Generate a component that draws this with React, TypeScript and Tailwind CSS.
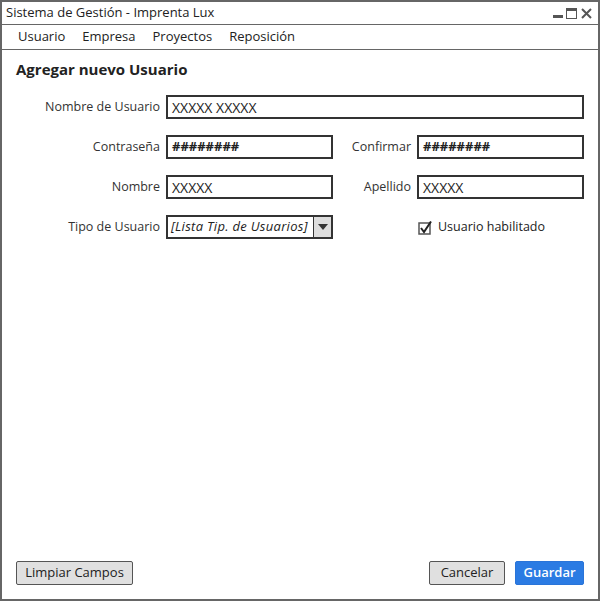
import React from 'react';

const font = { fontFamily: '"Open Sans", "Lato", "Liberation Sans", sans-serif' };

const Field: React.FC<{ value: string; className?: string }> = ({ value, className = '' }) => (
  <div
    className={`flex h-6 items-center border-2 border-[#333] bg-white px-[4px] pt-[1px] text-[#222] ${className}`}
  >
    {value}
  </div>
);

const Label: React.FC<{ text: string }> = ({ text }) => (
  <div className="flex h-6 items-center justify-end pt-[2px] text-[12.5px] text-[#333]">{text}</div>
);

const Button: React.FC<{ text: string; primary?: boolean; className?: string }> = ({
  text,
  primary,
  className = '',
}) => (
  <button
    className={`h-6 rounded-[2px] border text-[13px] ${
      primary
        ? 'border-[#2a74d8] bg-[#2b7be3] font-semibold text-white'
        : 'border-[#555] bg-[#e0e0e0] text-[#222]'
    } ${className}`}
  >
    {text}
  </button>
);

export default function App() {
  return (
    <div style={font} className="flex h-[601px] w-[600px] flex-col border-2 border-[#666] bg-white">
      {/* title bar */}
      <div className="flex h-[23px] items-center justify-between border-b border-[#666] pl-[4px] pr-[6px]">
        <span className="text-[13px] text-[#222]">Sistema de Gestión - Imprenta Lux</span>
        <div className="flex items-end gap-[3px] pt-[1px]">
          <div className="mb-[1px] h-[3px] w-[10px] bg-[#555]" />
          <div className="h-[11px] w-[11px] border border-[#555] border-t-[3px]" />
          <svg width="11" height="11" viewBox="0 0 11 11" className="ml-[1px]">
            <path d="M1 1 L10 10 M10 1 L1 10" stroke="#555" strokeWidth="2" />
          </svg>
        </div>
      </div>

      {/* menu */}
      <div className="flex h-[25px] items-center gap-[17px] border-b border-[#666] pl-[16px] text-[13px] text-[#222]">
        <span>Usuario</span>
        <span>Empresa</span>
        <span>Proyectos</span>
        <span>Reposición</span>
      </div>

      <div className="flex flex-1 flex-col px-[14px] pb-[14px]">
        <h1 className="mt-[8px] text-[15px] font-bold text-[#222]">Agregar nuevo Usuario</h1>

        <div className="mt-[14px] grid grid-cols-[144px_167px_1fr_167px] gap-x-[6px] gap-y-[16px]">
          <Label text="Nombre de Usuario" />
          <Field value="XXXXX XXXXX" className="col-span-3 text-[14px]" />

          <Label text="Contraseña" />
          <Field value="########" className="text-[13px] font-bold" />
          <Label text="Confirmar" />
          <Field value="########" className="text-[13px] font-bold" />

          <Label text="Nombre" />
          <Field value="XXXXX" className="text-[14px]" />
          <Label text="Apellido" />
          <Field value="XXXXX" className="text-[14px]" />

          <Label text="Tipo de Usuario" />
          <div className="flex h-6 items-stretch border-2 border-[#333] bg-white">
            <div className="flex flex-1 items-center overflow-hidden whitespace-nowrap pl-[3px] pt-[1px] text-[13px] italic tracking-[0.3px] text-[#222]">
              [Lista Tip. de Usuarios]
            </div>
            <div className="flex w-[18px] items-center justify-center border-l border-[#333] bg-[#ddd]">
              <svg width="10" height="6" viewBox="0 0 10 6">
                <path d="M0 0 L10 0 L5 6 Z" fill="#333" />
              </svg>
            </div>
          </div>
          <div />
          <div className="flex h-6 items-center gap-[6px] pl-[1px] pt-[2px] text-[12.5px] text-[#222]">
            <svg width="14" height="14" viewBox="0 0 14 14">
              <rect x="1" y="2" width="11" height="11" fill="white" stroke="#555" strokeWidth="1.5" />
              <path d="M3 7 L6 11 L13 0.5" fill="none" stroke="#222" strokeWidth="2" />
            </svg>
            <span>Usuario habilitado</span>
          </div>
        </div>

        <div className="mt-auto flex items-center">
          <Button text="Limpiar Campos" className="w-[117px]" />
          <div className="flex-1" />
          <Button text="Cancelar" className="w-[76px]" />
          <Button text="Guardar" primary className="ml-[10px] w-[69px]" />
        </div>
      </div>
    </div>
  );
}
